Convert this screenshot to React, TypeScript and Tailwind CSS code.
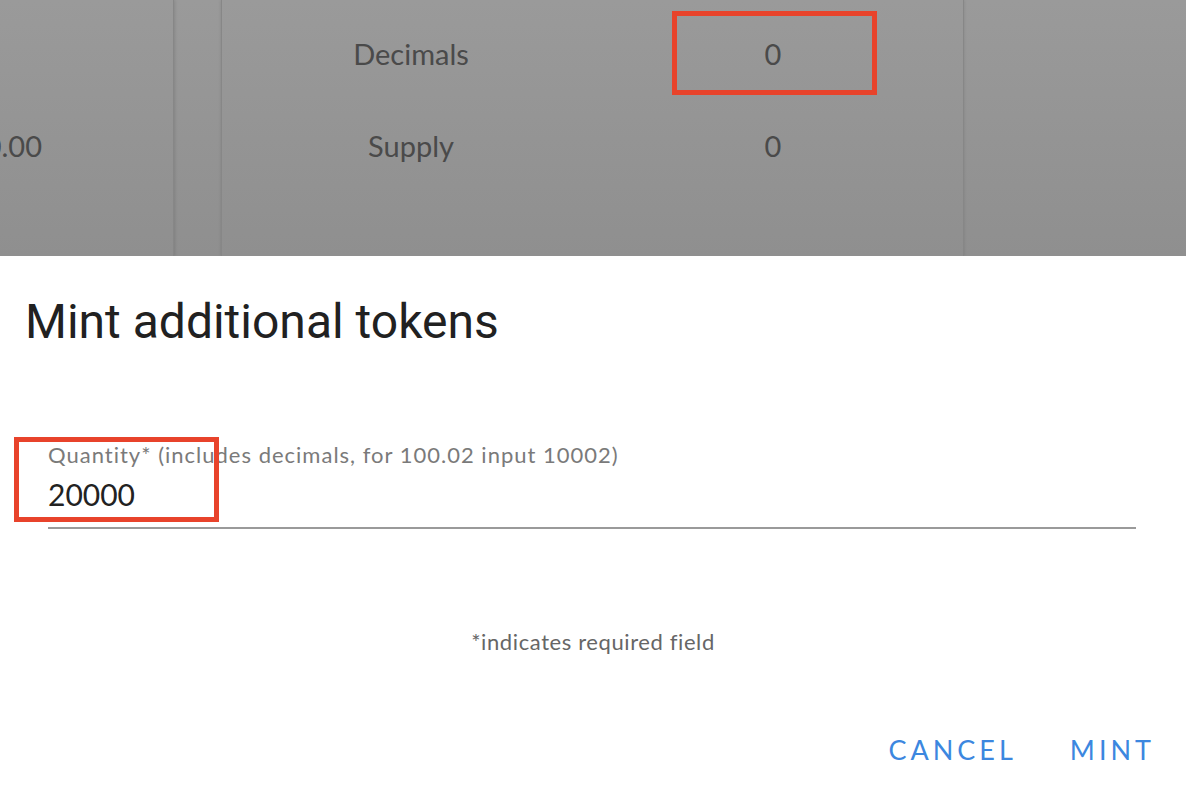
const body = { fontFamily: "Lato, 'Open Sans', sans-serif" };
const title = { fontFamily: "Roboto, 'Liberation Sans', sans-serif" };

const InfoRow = ({ label, value }: { label: string; value: string }) => (
  <>
    <div className="text-center">{label}</div>
    <div className="text-center">{value}</div>
  </>
);

const Backdrop = () => (
  <div className="flex h-[256px] bg-gradient-to-b from-[#9a9a9a] to-[#8f8f8f] text-[29px] leading-[34px] text-[#4a4a4a]">
    <div className="w-[174px] shrink-0 overflow-hidden border-r border-[#878787] shadow-[1px_0_3px_rgba(0,0,0,0.12)]">
      <div className="flex w-[42px] justify-end whitespace-nowrap pt-[129px]">
        <span>0.00</span>
      </div>
    </div>
    <div className="w-[47px] shrink-0" />
    <div className="w-[743px] shrink-0 border-x border-[#878787] shadow-[0_0_3px_rgba(0,0,0,0.12)]">
      <div className="grid grid-cols-[378px_346px] gap-y-[58px] pt-[37px]">
        <InfoRow label="Decimals" value="0" />
        <InfoRow label="Supply" value="0" />
      </div>
    </div>
    <div className="flex-1" />
  </div>
);

const MintDialog = () => (
  <div className="flex flex-1 flex-col bg-white">
    <h2 style={title} className="pl-[25px] pt-[38px] text-[48px] leading-[56px] font-normal text-[#212121]">
      Mint additional tokens
    </h2>
    <div className="mt-[93px] pl-[48px] pr-[50px]">
      <div className="text-[22px] leading-[24px] tracking-[1px] text-[#7a7a7a] whitespace-nowrap">
        Quantity* (includes decimals, for 100.02 input 10002)
      </div>
      <div className="mt-[9px] text-[30px] leading-[36px] text-[#222]">20000</div>
      <div className="mt-[15px] h-[2px] bg-[#9a9a9a]" />
    </div>
    <div className="mt-[101px] text-center text-[22px] leading-[24px] tracking-[0.6px] text-[#666]">
      *indicates required field
    </div>
    <div className="mt-[80px] flex justify-end gap-[53px] pr-[31px] text-[27px] leading-[32px] tracking-[4px] text-[#3c87df]">
      <button>CANCEL</button>
      <button>MINT</button>
    </div>
  </div>
);

export default function App() {
  return (
    <div style={body} className="relative flex h-[794px] w-[1186px] flex-col overflow-hidden">
      <Backdrop />
      <MintDialog />
      {/* annotation boxes */}
      <div className="absolute left-[672px] top-[11px] h-[84px] w-[205px] border-[5px] border-[#e8432b]" />
      <div className="absolute left-[14px] top-[437px] h-[85px] w-[205px] border-[5px] border-[#e8432b]" />
    </div>
  );
}
